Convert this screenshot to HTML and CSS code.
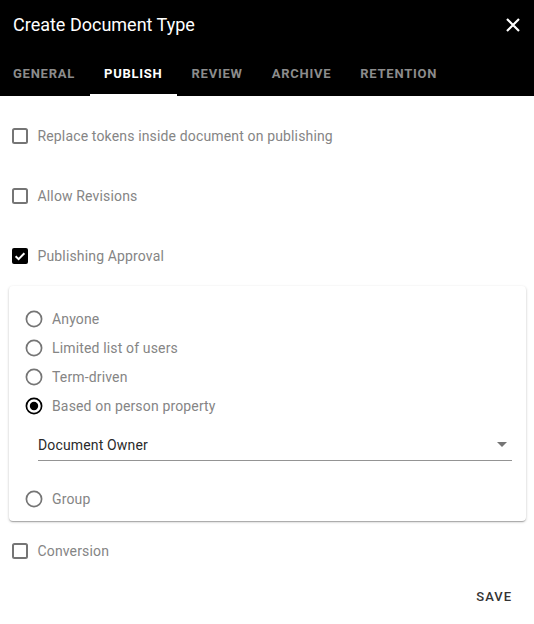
FILE: index.html
```html
<!DOCTYPE html>
<html>
<head>
<meta charset="utf-8">
<link rel="stylesheet" href="styles.css">
</head>
<body>
<div class="dialog">
  <div class="header">
    <div class="title-bar">
      <span class="title">Create Document Type</span>
      <svg class="close" width="14" height="14" viewBox="0 0 14 14"><path d="M1 1L13 13M13 1L1 13" stroke="#fff" stroke-width="2.2" fill="none"/></svg>
    </div>
    <div class="tabs">
      <div class="tab">General</div>
      <div class="tab active">Publish</div>
      <div class="tab">Review</div>
      <div class="tab">Archive</div>
      <div class="tab">Retention</div>
    </div>
  </div>
  <div class="content">
    <label class="check-row">
      <svg class="cb" width="16" height="16" viewBox="0 0 16 16"><rect x="1" y="1" width="14" height="14" rx="1.5" fill="none" stroke="#757575" stroke-width="2"/></svg>
      <span class="label">Replace tokens inside document on publishing</span>
    </label>
    <label class="check-row">
      <svg class="cb" width="16" height="16" viewBox="0 0 16 16"><rect x="1" y="1" width="14" height="14" rx="1.5" fill="none" stroke="#757575" stroke-width="2"/></svg>
      <span class="label">Allow Revisions</span>
    </label>
    <label class="check-row">
      <svg class="cb" width="16" height="16" viewBox="0 0 16 16"><rect x="0" y="0" width="16" height="16" rx="2" fill="#000"/><path d="M3.6 8.2L6.6 11.1L12.4 5.2" stroke="#fff" stroke-width="2" fill="none"/></svg>
      <span class="label">Publishing Approval</span>
    </label>
    <div class="card">
      <div class="radio-row">
        <svg class="rb" width="18" height="18" viewBox="0 0 18 18"><circle cx="9" cy="9" r="7.6" fill="none" stroke="#757575" stroke-width="1.7"/></svg>
        <span class="label">Anyone</span>
      </div>
      <div class="radio-row">
        <svg class="rb" width="18" height="18" viewBox="0 0 18 18"><circle cx="9" cy="9" r="7.6" fill="none" stroke="#757575" stroke-width="1.7"/></svg>
        <span class="label">Limited list of users</span>
      </div>
      <div class="radio-row">
        <svg class="rb" width="18" height="18" viewBox="0 0 18 18"><circle cx="9" cy="9" r="7.6" fill="none" stroke="#757575" stroke-width="1.7"/></svg>
        <span class="label">Term-driven</span>
      </div>
      <div class="radio-row">
        <svg class="rb" width="18" height="18" viewBox="0 0 18 18"><circle cx="9" cy="9" r="7.6" fill="none" stroke="#000" stroke-width="1.7"/><circle cx="9" cy="9" r="4.2" fill="#000"/></svg>
        <span class="label">Based on person property</span>
      </div>
      <div class="select">
        <span class="select-value">Document Owner</span>
        <svg class="arrow" width="10" height="5" viewBox="0 0 10 5"><path d="M0 0L10 0L5 5Z" fill="#757575"/></svg>
      </div>
      <div class="radio-row group-row">
        <svg class="rb" width="18" height="18" viewBox="0 0 18 18"><circle cx="9" cy="9" r="7.6" fill="none" stroke="#757575" stroke-width="1.7"/></svg>
        <span class="label">Group</span>
      </div>
    </div>
    <label class="check-row">
      <svg class="cb" width="16" height="16" viewBox="0 0 16 16"><rect x="1" y="1" width="14" height="14" rx="1.5" fill="none" stroke="#757575" stroke-width="2"/></svg>
      <span class="label">Conversion</span>
    </label>
    <div class="actions">
      <button class="save">Save</button>
    </div>
  </div>
</div>
</body>
</html>
```
FILE: styles.css
```css
* { box-sizing: border-box; }
html, body { margin: 0; padding: 0; background: #fff; }
body { font-family: Roboto, "Noto Sans", sans-serif; width: 534px; height: 624px; overflow: hidden; }
.dialog { width: 534px; }
.header { background: #000; color: #fff; }
.title-bar { height: 48px; display: flex; align-items: center; justify-content: space-between; padding: 0 14px 0 13px; }
.title { font-size: 18px; font-weight: 400; }
.close { display: block; margin-top: 1px; }
.tabs { height: 48px; display: flex; }
.tab { padding: 0 14.5px; display: flex; align-items: center; font-size: 13px; font-weight: 700; text-transform: uppercase; letter-spacing: 0.75px; color: #8c8c8c; border-bottom: 2px solid transparent; padding-top: 5px; }
.tab:first-child { padding-left: 13px; }
.tab.active { color: #fff; border-bottom-color: #fff; }
.content { padding-top: 10px; }
.check-row { height: 60px; display: flex; align-items: center; padding-left: 12px; }
.cb { display: block; flex: none; }
.check-row .label { margin-left: 9.5px; }
.label { font-size: 14px; color: #858585; letter-spacing: 0.15px; }
.card { margin: 0 8px 0 9px; border-radius: 4px; background: #fff; box-shadow: 0 1px 3px rgba(0,0,0,0.2), 0 1px 1px rgba(0,0,0,0.14), 0 2px 1px -1px rgba(0,0,0,0.12); padding: 19px 14px 8px 16px; }
.radio-row { height: 28.8px; display: flex; align-items: center; }
.rb { display: block; flex: none; margin-left: -0.5px; }
.radio-row .label { margin-left: 9.5px; }
.select { margin: 10px 0 0 13px; height: 31px; border-bottom: 1px solid #949494; display: flex; align-items: center; justify-content: space-between; padding: 0 5px 0 0; }
.select-value { font-size: 14px; color: #2a2a2a; letter-spacing: 0.15px; }
.arrow { display: block; margin-top: -1px; }
.group-row { margin-top: 23px; }
.actions { display: flex; justify-content: flex-end; padding: 2px 22px 0 0; }
.save { border: 0; background: none; font-family: Roboto, sans-serif; font-size: 13px; font-weight: 500; letter-spacing: 1px; text-transform: uppercase; color: #333; padding: 6px 0; }
```
